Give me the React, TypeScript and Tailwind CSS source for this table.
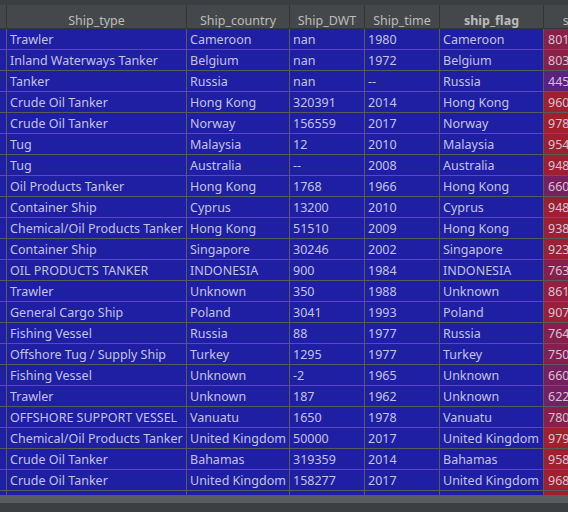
import React from "react";

type Row = [string, string, string, string, string, string];

const rows: Row[] = [
  ["Trawler", "Cameroon", "nan", "1980", "Cameroon", "8016.2"],
  ["Inland Waterways Tanker", "Belgium", "nan", "1972", "Belgium", "8034.1"],
  ["Tanker", "Russia", "nan", "--", "Russia", "445.7"],
  ["Crude Oil Tanker", "Hong Kong", "320391", "2014", "Hong Kong", "9600.4"],
  ["Crude Oil Tanker", "Norway", "156559", "2017", "Norway", "978.3"],
  ["Tug", "Malaysia", "12", "2010", "Malaysia", "9544.1"],
  ["Tug", "Australia", "--", "2008", "Australia", "9487.2"],
  ["Oil Products Tanker", "Hong Kong", "1768", "1966", "Hong Kong", "6607.5"],
  ["Container Ship", "Cyprus", "13200", "2010", "Cyprus", "948.6"],
  ["Chemical/Oil Products Tanker", "Hong Kong", "51510", "2009", "Hong Kong", "9387.0"],
  ["Container Ship", "Singapore", "30246", "2002", "Singapore", "9234.5"],
  ["OIL PRODUCTS TANKER", "INDONESIA", "900", "1984", "INDONESIA", "7634.2"],
  ["Trawler", "Unknown", "350", "1988", "Unknown", "8617.3"],
  ["General Cargo Ship", "Poland", "3041", "1993", "Poland", "907.1"],
  ["Fishing Vessel", "Russia", "88", "1977", "Russia", "7644.8"],
  ["Offshore Tug / Supply Ship", "Turkey", "1295", "1977", "Turkey", "7504.6"],
  ["Fishing Vessel", "Unknown", "-2", "1965", "Unknown", "660.2"],
  ["Trawler", "Unknown", "187", "1962", "Unknown", "6224.0"],
  ["OFFSHORE SUPPORT VESSEL", "Vanuatu", "1650", "1978", "Vanuatu", "7804.3"],
  ["Chemical/Oil Products Tanker", "United Kingdom", "50000", "2017", "United Kingdom", "9797.2"],
  ["Crude Oil Tanker", "Bahamas", "319359", "2014", "Bahamas", "958.4"],
  ["Crude Oil Tanker", "United Kingdom", "158277", "2017", "United Kingdom", "968.5"],
  ["Bulk Carrier", "Panama", "76000", "2011", "Panama", "951.0"],
];

function heat(v: string): string {
  const t = parseInt(v.replace(".", "").slice(0, 3), 10) / 1000;
  const d = t - 0.445;
  const r = Math.round(92 + 130 * d);
  const g = 32;
  const b = Math.round(128 - 159 * d);
  return `rgb(${r},${g},${b})`;
}

const font = { fontFamily: '"Noto Sans", "Noto Sans CJK SC", sans-serif' };

const cell =
  "h-[21px] border-r border-b border-[#5a5a5a] pl-[3px] leading-[21px] whitespace-nowrap overflow-hidden text-[12.5px] text-[#c2c2e2]";

const head =
  "h-[24px] border-r border-b border-[#333536] bg-[#45484a] text-[12.5px] text-[#bbbbbb] leading-[31px] text-center whitespace-nowrap overflow-hidden";

export default function App() {
  return (
    <div
      className="w-[568px] h-[512px] overflow-hidden bg-[#3c3f41] flex flex-col"
      style={font}
    >
      <div className="h-[5px] bg-[#3c3f41] shrink-0" />
      <div className="h-[490px] overflow-hidden shrink-0 bg-[#1f1fa3]">
        <div className="grid grid-cols-[7px_180px_103px_75px_75px_104px_100px] w-[644px]">
          <div className={head} />
          <div className={head}>Ship_type</div>
          <div className={head}>Ship_country</div>
          <div className={head}>Ship_DWT</div>
          <div className={head}>Ship_time</div>
          <div className={`${head} font-bold`}>ship_flag</div>
          <div className={head}>ship_score</div>
          {rows.map((r, i) => (
            <React.Fragment key={i}>
              <div className={`${cell} bg-[#1f1fa3]`} />
              <div className={`${cell} bg-[#1f1fa3]`}>{r[0]}</div>
              <div className={`${cell} bg-[#1f1fa3]`}>{r[1]}</div>
              <div className={`${cell} bg-[#1f1fa3]`}>{r[2]}</div>
              <div className={`${cell} bg-[#1f1fa3]`}>{r[3]}</div>
              <div className={`${cell} bg-[#1f1fa3]`}>{r[4]}</div>
              <div
                className={`${cell} pl-[4px] text-[#d4c0d4]`}
                style={{ backgroundColor: heat(r[5]) }}
              >
                {r[5]}
              </div>
            </React.Fragment>
          ))}
        </div>
      </div>
      <div className="h-[8px] bg-[#595c5e] shrink-0" />
      <div className="flex-1 bg-[#3c3f41]" />
    </div>
  );
}
